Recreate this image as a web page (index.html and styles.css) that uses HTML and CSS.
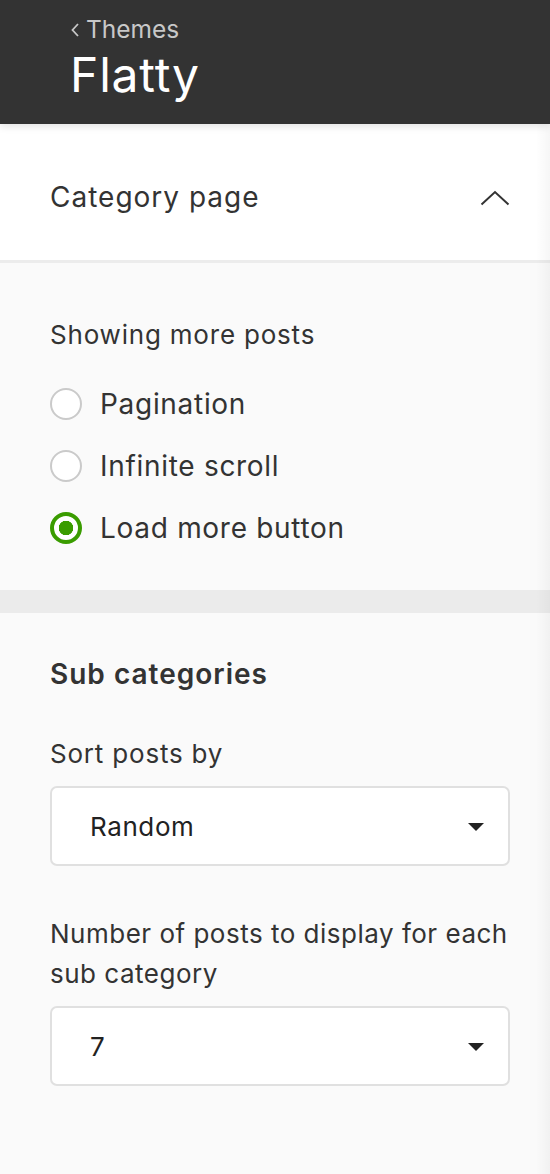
FILE: index.html
```html
<!DOCTYPE html>
<html lang="en">
<head>
<meta charset="utf-8">
<title>Flatty</title>
<link rel="stylesheet" href="styles.css">
</head>
<body>
<div class="page">
  <header class="topbar">
    <a class="back"><svg class="back-chev" width="10" height="16" viewBox="0 0 10 16"><path d="M8 2 L2.5 8 L8 14" fill="none" stroke="#c8c8c8" stroke-width="1.8"/></svg>Themes</a>
    <h1 class="title">Flatty</h1>
  </header>

  <div class="accordion-head">
    <span class="accordion-title">Category page</span>
    <svg class="chev" width="30" height="16" viewBox="0 0 30 16"><path d="M1.5 14.5 L15 2 L28.5 14.5" fill="none" stroke="#333" stroke-width="2"/></svg>
  </div>

  <section class="panel panel-first">
    <div class="label">Showing more posts</div>
    <div class="radios">
      <label class="radio"><span class="dot"></span>Pagination</label>
      <label class="radio"><span class="dot"></span>Infinite scroll</label>
      <label class="radio"><span class="dot checked"></span>Load more button</label>
    </div>
  </section>

  <div class="divider"></div>

  <section class="panel panel-second">
    <h2 class="heading">Sub categories</h2>
    <div class="field">
      <div class="label">Sort posts by</div>
      <div class="select"><span>Random</span><span class="caret"></span></div>
    </div>
    <div class="field">
      <div class="label label-long">Number of posts to display for each sub category</div>
      <div class="select"><span>7</span><span class="caret"></span></div>
    </div>
  </section>
</div>
</body>
</html>
```

FILE: styles.css
```css
* { box-sizing: border-box; }
html, body { margin: 0; padding: 0; }
body {
  font-family: "Inter", "Noto Sans", "Liberation Sans", sans-serif;
  color: #333;
  background: #fafafa;
  width: 550px;
  height: 1174px;
  overflow: hidden;
}
.page {
  position: relative;
  min-height: 1174px;
  background: #fafafa;
}
.page::after {
  content: "";
  position: absolute;
  top: 0; right: 0; bottom: 0;
  width: 14px;
  background: linear-gradient(to right, rgba(0,0,0,0), rgba(0,0,0,0.035));
  pointer-events: none;
}
.topbar {
  position: relative;
  z-index: 2;
  background: #333;
  height: 124px;
  padding: 14px 0 0 70px;
  box-shadow: 0 2px 8px rgba(0,0,0,0.12);
}
.back {
  display: flex;
  align-items: center;
  color: #c8c8c8;
  font-size: 24.5px;
  line-height: 30px;
  height: 30px;
}
.back-chev {
  margin-right: 6px;
  margin-top: 1px;
}
.title {
  margin: 0;
  color: #fff;
  font-weight: 400;
  font-size: 48px;
  letter-spacing: 0.8px;
  line-height: 62px;
}
.accordion-head {
  display: flex;
  align-items: center;
  justify-content: space-between;
  height: 139px;
  padding: 0 40px 0 50px;
  background: #fff;
  border-bottom: 3px solid #ececec;
}
.accordion-title {
  font-size: 28px;
  letter-spacing: 1px;
  color: #333;
  margin-top: 10px;
}
.chev { margin-top: 12px; }
.panel {
  padding: 0 40px 0 50px;
  background: #fafafa;
}
.panel-first {
  padding-top: 52px;
  height: 327px;
}
.label {
  font-size: 26px;
  letter-spacing: 0.8px;
  line-height: 40px;
  color: #333;
}
.label-long { letter-spacing: 0.5px; }
.radios {
  display: flex;
  flex-direction: column;
  gap: 30px;
  margin-top: 33px;
}
.radio {
  display: flex;
  align-items: center;
  gap: 18px;
  font-size: 28px;
  letter-spacing: 0.7px;
  line-height: 32px;
  color: #333;
}
.dot {
  width: 32px;
  height: 32px;
  border-radius: 50%;
  border: 2px solid #cacaca;
  background: #fff;
  flex: none;
}
.dot.checked {
  border: 4px solid #3a9c00;
  background: radial-gradient(circle, #3a9c00 0 7px, #fff 7.5px);
}
.divider {
  height: 23px;
  background: #ebebeb;
}
.panel-second {
  padding-top: 37px;
  height: 561px;
}
.heading {
  margin: 0;
  font-size: 28px;
  font-weight: 600;
  letter-spacing: 1px;
  line-height: 48px;
  color: #333;
}
.field { margin-top: 36px; }
.field + .field { margin-top: 48px; }
.select {
  margin-top: 12px;
  height: 80px;
  border: 2px solid #e0e0e0;
  border-radius: 7px;
  background: #fff;
  display: flex;
  align-items: center;
  justify-content: space-between;
  padding: 0 24px 0 38px;
  font-size: 26px;
  letter-spacing: 0.6px;
  color: #222;
}
.caret {
  width: 0; height: 0;
  border-left: 8px solid transparent;
  border-right: 8px solid transparent;
  border-top: 8px solid #222;
  margin-top: 2px;
}
```
